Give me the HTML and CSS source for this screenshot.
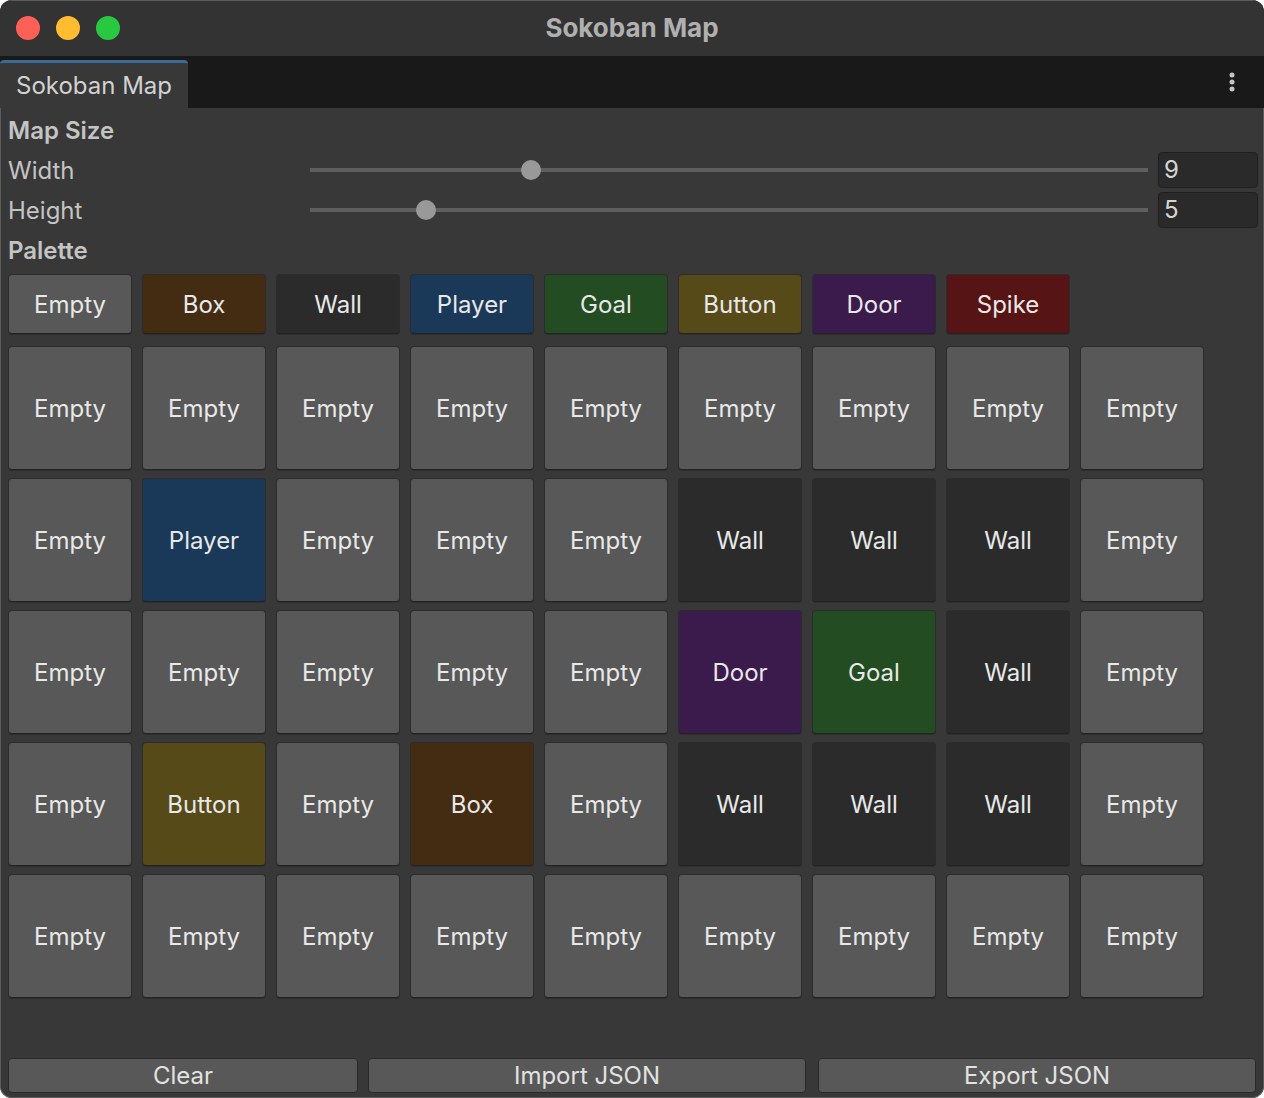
FILE: index.html
```html
<!DOCTYPE html>
<html lang="en">
<head>
    <meta charset="UTF-8">
    <title>Sokoban Map</title>
    <link rel="stylesheet" href="styles.css">
</head>
<body>
    <div class="window">
        <!-- Title bar -->
        <div class="titlebar">
            <div class="lights">
                <span class="light red"></span>
                <span class="light yellow"></span>
                <span class="light green"></span>
            </div>
            <div class="title">Sokoban Map</div>
        </div>

        <!-- Tab strip -->
        <div class="tabbar">
            <div class="tab">Sokoban Map</div>
            <div class="menu-dots">
                <svg width="6" height="20" viewBox="0 0 6 20">
                    <circle cx="3" cy="3" r="2.5" fill="#c4c4c4"/>
                    <circle cx="3" cy="10" r="2.5" fill="#c4c4c4"/>
                    <circle cx="3" cy="17" r="2.5" fill="#c4c4c4"/>
                </svg>
            </div>
        </div>

        <div class="content">
            <div class="row header">Map Size</div>
            <div class="row field-row">
                <div class="label">Width</div>
                <div class="slider">
                    <div class="track"></div>
                    <div class="thumb" style="left: 26.4%"></div>
                </div>
                <div class="number">9</div>
            </div>
            <div class="row field-row">
                <div class="label">Height</div>
                <div class="slider">
                    <div class="track"></div>
                    <div class="thumb" style="left: 13.9%"></div>
                </div>
                <div class="number">5</div>
            </div>
            <div class="row header">Palette</div>

            <div class="palette">
                <div class="cell empty">Empty</div>
                <div class="cell box">Box</div>
                <div class="cell wall">Wall</div>
                <div class="cell player">Player</div>
                <div class="cell goal">Goal</div>
                <div class="cell button">Button</div>
                <div class="cell door">Door</div>
                <div class="cell spike">Spike</div>
            </div>

            <div class="map">
                <div class="cell empty">Empty</div>
                <div class="cell empty">Empty</div>
                <div class="cell empty">Empty</div>
                <div class="cell empty">Empty</div>
                <div class="cell empty">Empty</div>
                <div class="cell empty">Empty</div>
                <div class="cell empty">Empty</div>
                <div class="cell empty">Empty</div>
                <div class="cell empty">Empty</div>

                <div class="cell empty">Empty</div>
                <div class="cell player">Player</div>
                <div class="cell empty">Empty</div>
                <div class="cell empty">Empty</div>
                <div class="cell empty">Empty</div>
                <div class="cell wall">Wall</div>
                <div class="cell wall">Wall</div>
                <div class="cell wall">Wall</div>
                <div class="cell empty">Empty</div>

                <div class="cell empty">Empty</div>
                <div class="cell empty">Empty</div>
                <div class="cell empty">Empty</div>
                <div class="cell empty">Empty</div>
                <div class="cell empty">Empty</div>
                <div class="cell door">Door</div>
                <div class="cell goal">Goal</div>
                <div class="cell wall">Wall</div>
                <div class="cell empty">Empty</div>

                <div class="cell empty">Empty</div>
                <div class="cell button">Button</div>
                <div class="cell empty">Empty</div>
                <div class="cell box">Box</div>
                <div class="cell empty">Empty</div>
                <div class="cell wall">Wall</div>
                <div class="cell wall">Wall</div>
                <div class="cell wall">Wall</div>
                <div class="cell empty">Empty</div>

                <div class="cell empty">Empty</div>
                <div class="cell empty">Empty</div>
                <div class="cell empty">Empty</div>
                <div class="cell empty">Empty</div>
                <div class="cell empty">Empty</div>
                <div class="cell empty">Empty</div>
                <div class="cell empty">Empty</div>
                <div class="cell empty">Empty</div>
                <div class="cell empty">Empty</div>
            </div>

            <div class="actions">
                <div class="action clear">Clear</div>
                <div class="action import">Import JSON</div>
                <div class="action export">Export JSON</div>
            </div>
        </div>
    </div>
</body>
</html>
```

FILE: styles.css
```css
html, body {
    margin: 0;
    padding: 0;
    background-color: #ffffff;
}

body {
    font-family: Inter, "Noto Sans", sans-serif;
    width: 1264px;
    height: 1098px;
    overflow: hidden;
}

.window {
    width: 1264px;
    height: 1098px;
    box-sizing: border-box;
    border-radius: 12px;
    overflow: hidden;
    background-color: #383838;
    display: flex;
    flex-direction: column;
    box-shadow: inset 0 0 0 1px #5a5a5a;
}

/* title bar */
.titlebar {
    height: 56px;
    flex: none;
    background-color: #333333;
    position: relative;
    display: flex;
    align-items: center;
    justify-content: center;
    border-top: 1px solid #5c5c5c;
    box-sizing: border-box;
}

.lights {
    position: absolute;
    left: 16px;
    top: 15px;
    display: flex;
    gap: 16px;
}

.light {
    width: 24px;
    height: 24px;
    border-radius: 50%;
}

.light.red { background-color: #fe5f57; }
.light.yellow { background-color: #febc2e; }
.light.green { background-color: #28c840; }

.title {
    color: #b0b0b0;
    font-size: 26px;
    font-weight: 700;
    margin-top: -2px;
}

/* tab strip */
.tabbar {
    height: 52px;
    flex: none;
    background-color: #191919;
    display: flex;
    align-items: flex-end;
    justify-content: space-between;
}

.tab {
    width: 188px;
    height: 48px;
    box-sizing: border-box;
    background-color: #383838;
    border-top: 3px solid #3a6a99;
    border-radius: 4px 4px 0 0;
    color: #d2d2d2;
    font-size: 24px;
    padding-left: 16px;
    line-height: 46px;
}

.menu-dots {
    align-self: center;
    padding-right: 29px;
    display: flex;
}

/* content */
.content {
    flex: 1;
    display: flex;
    flex-direction: column;
    padding: 2px 6px 5px 8px;
}

.row {
    height: 40px;
    display: flex;
    align-items: center;
}

.header {
    color: #c4c4c4;
    font-size: 24px;
    font-weight: 600;
}

.field-row .label {
    width: 302px;
    color: #c4c4c4;
    font-size: 24px;
    flex: none;
}

.slider {
    flex: 1;
    height: 24px;
    position: relative;
    margin-right: 10px;
}

.track {
    position: absolute;
    left: 0;
    right: 0;
    top: 10px;
    height: 4px;
    background-color: #5e5e5e;
}

.thumb {
    position: absolute;
    top: 2px;
    width: 20px;
    height: 20px;
    margin-left: -10px;
    border-radius: 50%;
    background-color: #999999;
}

.number {
    width: 100px;
    height: 36px;
    box-sizing: border-box;
    background-color: #2a2a2a;
    border: 1px solid #1f1f1f;
    border-radius: 4px;
    color: #d4d4d4;
    font-size: 24px;
    padding-left: 5px;
    line-height: 34px;
    flex: none;
}

/* cells */
.cell {
    box-sizing: border-box;
    border: 1px solid #2c2c2c;
    border-bottom-color: #232323;
    border-radius: 4px;
    display: flex;
    align-items: center;
    justify-content: center;
    color: #e8e8e8;
    font-size: 24px;
    box-shadow: 0 1px 0 #2e2e2e;
}

.cell.empty { background-color: #585858; }
.cell.box { background-color: #432c12; }
.cell.wall { background-color: #2b2b2b; }
.cell.player { background-color: #1a3858; }
.cell.goal { background-color: #244c22; }
.cell.button { background-color: #564a19; }
.cell.door { background-color: #3b1a4c; }
.cell.spike { background-color: #561414; }

.palette {
    display: flex;
    gap: 10px;
    margin-top: 4px;
}

.palette .cell {
    width: 124px;
    height: 60px;
}

.map {
    display: grid;
    grid-template-columns: repeat(9, 124px);
    grid-auto-rows: 124px;
    column-gap: 10px;
    row-gap: 8px;
    margin-top: 12px;
}

/* bottom buttons */
.actions {
    margin-top: auto;
    display: flex;
}

.action {
    height: 35px;
    box-sizing: border-box;
    background-color: #585858;
    border: 1px solid #2a2a2a;
    border-radius: 4px;
    color: #e2e2e2;
    font-size: 24px;
    display: flex;
    align-items: center;
    justify-content: center;
}

.action.clear { width: 350px; }
.action.import { width: 438px; margin-left: 10px; }
.action.export { width: 438px; margin-left: 12px; }
```
